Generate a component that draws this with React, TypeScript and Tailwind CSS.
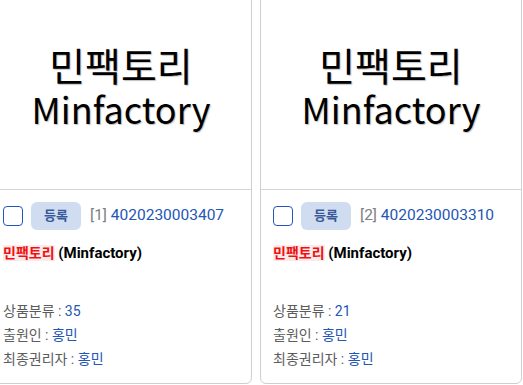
import React from 'react';

interface Mark {
  index: number;
  appNo: string;
  nameKo: string;
  nameEn: string;
  classes: string;
  applicant: string;
  owner: string;
}

const marks: Mark[] = [
  {
    index: 1,
    appNo: '4020230003407',
    nameKo: '민팩토리',
    nameEn: 'Minfactory',
    classes: '35',
    applicant: '홍민',
    owner: '홍민',
  },
  {
    index: 2,
    appNo: '4020230003310',
    nameKo: '민팩토리',
    nameEn: 'Minfactory',
    classes: '21',
    applicant: '홍민',
    owner: '홍민',
  },
];

const bodyFont = "font-['Roboto','Noto_Sans_CJK_KR',sans-serif]";

function MarkCard({ mark }: { mark: Mark }) {
  return (
    <div className="w-[262px] shrink-0 border border-[#cfcfcf] rounded-b-[6px] bg-white">
      {/* trademark image */}
      <div className="h-[190px] flex items-center justify-center border-b border-[#d4d4d4] pb-[16px]">
        <div className="text-center font-['Noto_Sans_CJK_KR',sans-serif] text-black text-[36px] leading-[43px] [text-shadow:1px_1px_1px_rgba(0,0,0,0.25)]">
          <span className="text-[39px]">{mark.nameKo}</span>
          <br />
          {mark.nameEn}
        </div>
      </div>
      <div className={`p-3 ${bodyFont}`}>
        <div className="flex items-center gap-2 h-7">
          <span className="w-5 h-5 rounded-[4px] border-[1.5px] border-[#2257b8] bg-white" />
          <button className="w-[50px] h-7 rounded-[6px] bg-[#d0ddf1] text-[#37599a] text-[13px] font-semibold">
            등록
          </button>
          <span className="text-[15.5px] ml-[1px]">
            <span className="text-[#808080]">[{mark.index}]</span>{' '}
            <span className="text-[#2356b5]">{mark.appNo}</span>
          </span>
        </div>
        <div className="mt-[14px] text-[15px] font-bold leading-[18px]">
          <span className="text-[#ee1111] bg-[#fdeaea] text-[14px]">{mark.nameKo}</span>{' '}
          <span className="text-black">({mark.nameEn})</span>
        </div>
        <div className="mt-[37px] flex flex-col text-[14px] leading-[24px] text-[#5c5c5c]">
          <div>
            상품분류 : <span className="text-[#2356b5]">{mark.classes}</span>
          </div>
          <div>
            출원인 : <span className="text-[#2356b5]">{mark.applicant}</span>
          </div>
          <div>
            최종권리자 : <span className="text-[#2356b5]">{mark.owner}</span>
          </div>
        </div>
      </div>
    </div>
  );
}

export default function App() {
  return (
    <div className="w-[523px] h-[385px] overflow-hidden bg-white">
      <div className="flex gap-2 -ml-[10px] -mt-[1px]">
        {marks.map((m) => (
          <MarkCard key={m.index} mark={m} />
        ))}
      </div>
    </div>
  );
}
